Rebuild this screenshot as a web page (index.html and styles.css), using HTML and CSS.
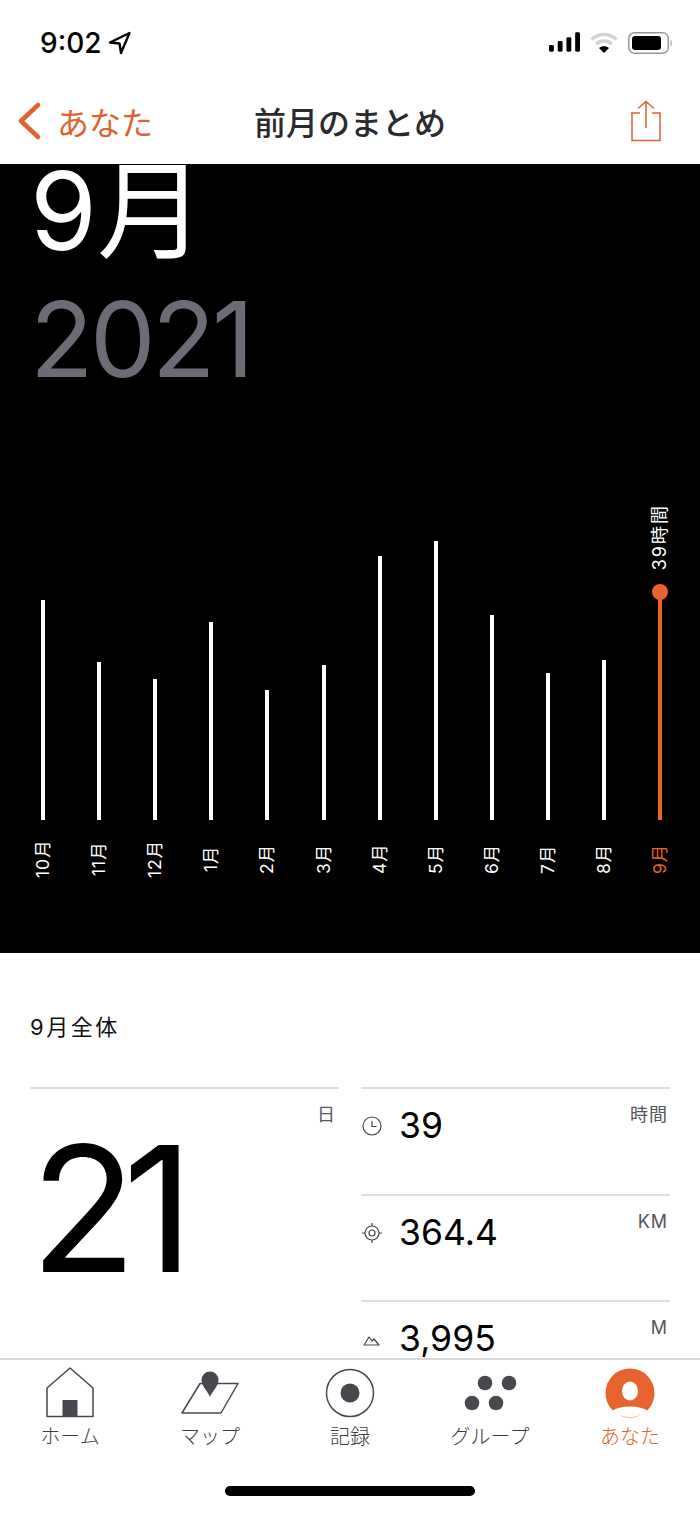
FILE: index.html
```html
<!DOCTYPE html>
<html lang="ja">
<head>
  <meta charset="UTF-8">
  <title>前月のまとめ</title>
  <link rel="stylesheet" href="styles.css">
</head>
<body>
  <div class="phone">
    <div class="status-bar">
      <div class="status-time">
        <span>9:02</span>
        <svg class="loc-icon" width="24" height="24" viewBox="0 0 24 24"><path d="M21.500 2 2 11.500 11.500 12.500 13 22Z" fill="none" stroke="#000" stroke-width="2.400" stroke-linejoin="round"/></svg>
      </div>
      <div class="status-icons">
        <svg width="31" height="20" viewBox="0 0 32 20"><rect x="0" y="13" width="5" height="7" rx="1.500"/><rect x="9" y="9" width="5" height="11" rx="1.500"/><rect x="18" y="5" width="5" height="15" rx="1.500"/><rect x="27" y="0" width="5" height="20" rx="1.500"/></svg>
        <svg width="28" height="22" viewBox="0 0 28 22"><path d="M1.500 7.500C8.500.8 19.500.8 26.500 7.500M6 12c4.500-4 11.500-4 16 0" fill="none" stroke="#d2d2d2" stroke-width="3.600"/><path d="M14 21l-5-5c3-2.200 7-2.200 10 0z" fill="#000"/></svg>
        <svg width="45" height="22" viewBox="0 0 45 22"><rect x=".8" y=".8" width="39.500" height="20.400" rx="5.500" fill="none" stroke="#999" stroke-width="1.500"/><rect x="4" y="4" width="29" height="14" rx="3"/><path d="M42.500 7.500c1.500.5 1.500 6.500 0 7z" fill="#999"/></svg>
      </div>
    </div>

    <header class="nav-bar">
      <div class="nav-back">
        <svg width="26" height="38" viewBox="0 0 26 38"><path d="M22 3 5 19l17 16" fill="none" stroke="#e0622f" stroke-width="4.500" stroke-linecap="round" stroke-linejoin="round"/></svg>
        <span>あなた</span>
      </div>
      <h1 class="nav-title">前月のまとめ</h1>
      <svg class="share-icon" width="32" height="42" viewBox="0 0 32 42"><path d="M10 13H2v27.500h28V13h-8M16 28V1.500M8 8.500l8-7 8 7" fill="none" stroke="#e0622f" stroke-width="1.500"/></svg>
    </header>

    <section class="hero">
      <div class="hero-month">9月</div>
      <div class="hero-year">2021</div>
      <div class="chart">
        <div class="bar-col"><div class="bar" style="height: 220px"></div><span class="bar-label">10月</span></div>
        <div class="bar-col"><div class="bar" style="height: 158px"></div><span class="bar-label">11月</span></div>
        <div class="bar-col"><div class="bar" style="height: 141px"></div><span class="bar-label">12月</span></div>
        <div class="bar-col"><div class="bar" style="height: 198px"></div><span class="bar-label">1月</span></div>
        <div class="bar-col"><div class="bar" style="height: 130px"></div><span class="bar-label">2月</span></div>
        <div class="bar-col"><div class="bar" style="height: 155px"></div><span class="bar-label">3月</span></div>
        <div class="bar-col"><div class="bar" style="height: 264px"></div><span class="bar-label">4月</span></div>
        <div class="bar-col"><div class="bar" style="height: 279px"></div><span class="bar-label">5月</span></div>
        <div class="bar-col"><div class="bar" style="height: 205px"></div><span class="bar-label">6月</span></div>
        <div class="bar-col"><div class="bar" style="height: 147px"></div><span class="bar-label">7月</span></div>
        <div class="bar-col"><div class="bar" style="height: 160px"></div><span class="bar-label">8月</span></div>
        <div class="bar-col current">
          <span class="bar-value">39時間</span>
          <div class="bar" style="height: 228px"></div>
          <span class="bar-label">9月</span>
        </div>
      </div>
    </section>

    <section class="summary">
      <h2 class="summary-title">9月全体</h2>
      <div class="summary-grid">
        <div class="days">
          <span class="unit">日</span>
          <div class="days-num">21</div>
        </div>
        <div class="stats">
          <div class="stat">
            <svg class="stat-icon" width="22" height="22" viewBox="0 0 22 22"><circle cx="11" cy="11" r="9" fill="none" stroke="#444" stroke-width="1.200"/><path d="M11 6v5.500h4.500" fill="none" stroke="#444" stroke-width="1.200"/></svg>
            <span class="stat-num">39</span>
            <span class="unit">時間</span>
          </div>
          <div class="stat">
            <svg class="stat-icon" width="22" height="22" viewBox="0 0 22 22"><circle cx="11" cy="11" r="7" fill="none" stroke="#444" stroke-width="1.200"/><circle cx="11" cy="11" r="3" fill="none" stroke="#444" stroke-width="1.200"/><path d="M11 1v3M11 18v3M1 11h3M18 11h3" stroke="#444" stroke-width="1.200"/></svg>
            <span class="stat-num">364.4</span>
            <span class="unit">KM</span>
          </div>
          <div class="stat">
            <svg class="stat-icon" width="22" height="22" viewBox="0 0 22 22"><path d="M3 17 8 9l3 4 2-2 5 6z" fill="none" stroke="#444" stroke-width="1.200" stroke-linejoin="round"/></svg>
            <span class="stat-num">3,995</span>
            <span class="unit">M</span>
          </div>
        </div>
      </div>
    </section>

    <nav class="tab-bar">
      <div class="tabs">
        <div class="tab">
          <svg width="50" height="52" viewBox="0 0 50 52"><path d="M2 21 25 1l23 20v28.500H2z" fill="none" stroke="#48484f" stroke-width="1.500" stroke-linejoin="round"/><rect x="17.500" y="33" width="15" height="16" fill="#48484f"/></svg>
          <span>ホーム</span>
        </div>
        <div class="tab">
          <svg width="60" height="52" viewBox="0 0 60 52"><path d="M2 46 20 16.500h38L41 46z" fill="#fff" stroke="#48484f" stroke-width="1.500" stroke-linejoin="round"/><path d="M30 30c-3-7-8.500-11-8.500-17a8.500 8.500 0 0 1 17 0c0 6-5.500 10-8.500 17z" fill="#48484f"/></svg>
          <span>マップ</span>
        </div>
        <div class="tab">
          <svg width="50" height="52" viewBox="0 0 50 52"><circle cx="25" cy="26" r="23.500" fill="none" stroke="#48484f" stroke-width="1.500"/><circle cx="25" cy="26" r="9.500" fill="#48484f"/></svg>
          <span>記録</span>
        </div>
        <div class="tab">
          <svg width="54" height="52" viewBox="0 0 54 52"><circle cx="22" cy="16" r="7.300" fill="#48484f"/><circle cx="46" cy="16" r="7.300" fill="#48484f"/><circle cx="9" cy="36" r="7.300" fill="#48484f"/><circle cx="33" cy="36" r="7.300" fill="#48484f"/></svg>
          <span>グループ</span>
        </div>
        <div class="tab active">
          <svg width="50" height="52" viewBox="0 0 50 52"><circle cx="25" cy="26" r="24.500" fill="#e8632e"/><ellipse cx="25" cy="24" rx="8" ry="9.500" fill="#fff"/><path d="M7 44c4-3 10-4.500 18-4.500s14 1.500 18 4.500c-9 8-27 8-36 0z" fill="#fff"/></svg>
          <span>あなた</span>
        </div>
      </div>
      <div class="home-indicator"></div>
    </nav>
  </div>
</body>
</html>
```

FILE: styles.css
```css
* {
  box-sizing: border-box;
}
body {
  margin: 0;
  background-color: #fff;
  font-family: "Inter", "Liberation Sans", "Noto Sans CJK JP", sans-serif;
}
.phone {
  width: 700px;
  height: 1515px;
  display: flex;
  flex-direction: column;
  overflow: hidden;
}

/* status bar */
.status-bar {
  height: 82px;
  flex: none;
  display: flex;
  justify-content: space-between;
  padding: 27px 27px 0 40px;
}
.status-time {
  display: flex;
  align-items: flex-start;
  gap: 7px;
  font-size: 28px;
  font-weight: 500;
  line-height: 32px;
  color: #000;
}
.loc-icon {
  margin-top: 4px;
}
.status-icons {
  display: flex;
  align-items: flex-start;
  gap: 10px;
  margin-top: 5px;
}

/* nav */
.nav-bar {
  height: 82px;
  flex: none;
  display: flex;
  align-items: center;
  justify-content: space-between;
  padding: 0 38px 4px 16px;
  position: relative;
}
.nav-back {
  display: flex;
  align-items: center;
  gap: 15px;
  font-size: 32px;
  color: #e0622f;
}
.nav-title {
  position: absolute;
  left: 0;
  right: 0;
  margin: 0;
  text-align: center;
  font-size: 32px;
  font-weight: 500;
  color: #2b2b2e;
}

/* black hero */
.hero {
  height: 789px;
  flex: none;
  background-color: #000;
  overflow: hidden;
  padding-left: 30px;
}
.hero-month {
  font-size: 108px;
  line-height: 100px;
  margin-top: -3px;
  color: #fff;
  font-weight: 400;
}
.hero-year {
  font-size: 104px;
  line-height: 100px;
  margin-top: 28px;
  color: #6c6c76;
  font-weight: 400;
  letter-spacing: -3.500px;
}
.chart {
  display: flex;
  align-items: flex-end;
  height: 500px;
  margin-left: -15px;
}
.bar-col {
  width: 56.100px;
  display: flex;
  flex-direction: column;
  align-items: center;
}
.bar {
  width: 4px;
  background-color: #fff;
}
.bar-label {
  writing-mode: vertical-rl;
  text-orientation: sideways;
  transform: rotate(180deg);
  height: 60px;
  margin-top: 9px;
  font-size: 17.500px;
  line-height: 20px;
  letter-spacing: 1px;
  color: #fff;
  text-align: center;
}
.current .bar {
  background-color: #e8632e;
  position: relative;
}
.current .bar::before {
  content: "";
  position: absolute;
  top: -8px;
  left: -6px;
  width: 16px;
  height: 16px;
  border-radius: 50%;
  background-color: #e8632e;
}
.current .bar-label {
  color: #e8632e;
}
.bar-value {
  writing-mode: vertical-rl;
  text-orientation: sideways;
  transform: rotate(180deg);
  margin-bottom: 22px;
  font-size: 18px;
  line-height: 20px;
  letter-spacing: 2px;
  color: #fff;
}

/* summary */
.summary {
  flex: 1;
  min-height: 0;
  overflow: hidden;
  padding: 60px 30px 0;
}
.summary-title {
  margin: 0;
  font-size: 22px;
  line-height: 28px;
  font-weight: 400;
  letter-spacing: 2.500px;
  color: #111;
}
.summary-grid {
  display: grid;
  grid-template-columns: 309px 309px;
  column-gap: 22px;
  margin-top: 46px;
}
.days {
  border-top: 2px solid #dedee0;
  position: relative;
}
.days .unit {
  position: absolute;
  top: 15px;
  right: 3px;
}
.days-num {
  font-size: 175px;
  line-height: 200px;
  margin-top: 19px;
  letter-spacing: -14px;
  font-weight: 400;
  color: #000;
}
.unit {
  font-size: 18px;
  line-height: 22px;
  letter-spacing: 1px;
  color: #55555a;
}
.stat {
  height: 106.500px;
  border-top: 2px solid #dedee0;
  display: flex;
  align-items: flex-start;
  padding-top: 15px;
}
.stat-icon {
  margin-top: 11px;
}
.stat-num {
  font-size: 35.500px;
  line-height: 44px;
  margin-left: 16px;
  color: #000;
}
.stat .unit {
  margin-left: auto;
  margin-right: 2px;
}

/* tab bar */
.tab-bar {
  height: 157px;
  flex: none;
  border-top: 2px solid #d8d8da;
  background-color: #fff;
}
.tabs {
  display: grid;
  grid-template-columns: repeat(5, 1fr);
  padding: 7px 0 0 0;
}
.tab {
  display: flex;
  flex-direction: column;
  align-items: center;
  font-size: 20px;
  font-weight: 300;
  line-height: 26px;
  color: #3c3c42;
}
.tab span {
  margin-top: 5px;
}
.tab.active {
  color: #e0622f;
}
.home-indicator {
  width: 250px;
  height: 10px;
  margin: 36px auto 0;
  border-radius: 5px;
  background-color: #000;
}
```
